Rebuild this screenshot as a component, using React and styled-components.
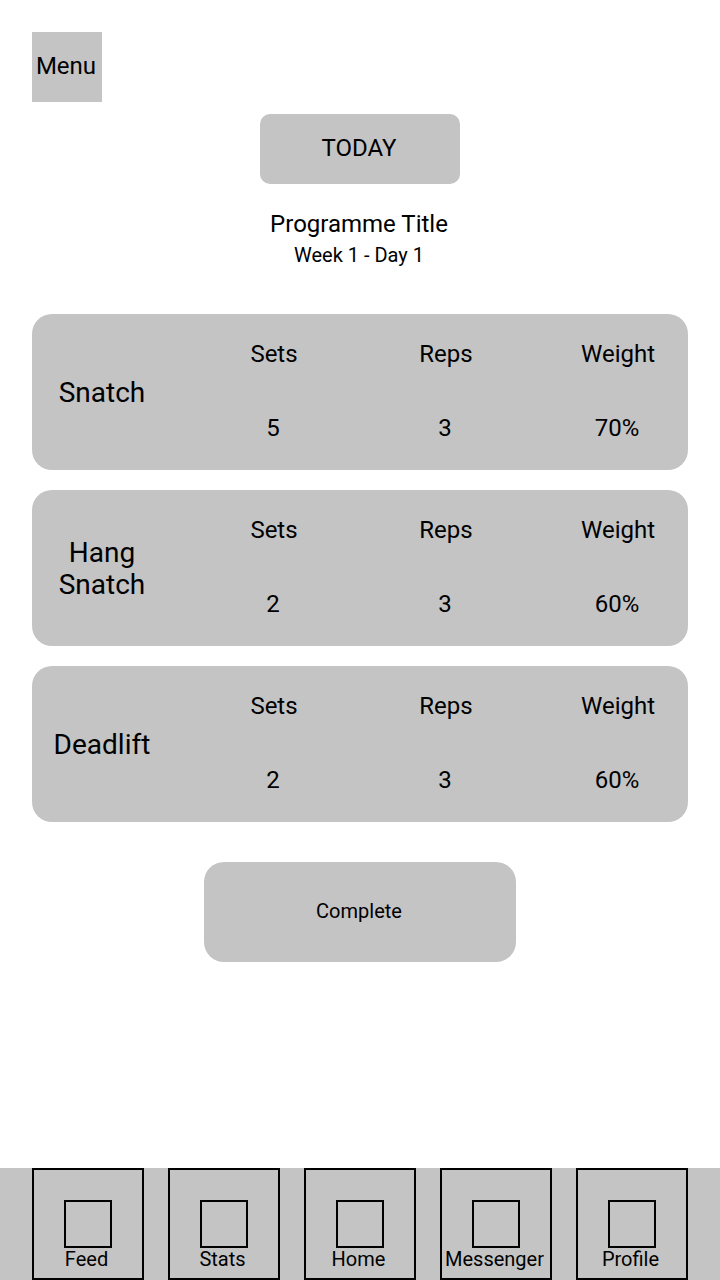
import React from "react";
import styled, { createGlobalStyle } from "styled-components";

const GlobalStyle = createGlobalStyle`
  *, *::before, *::after { box-sizing: border-box; }
  body {
    margin: 0;
    background: #fff;
    color: #000;
    font-family: Roboto, "Liberation Sans", sans-serif;
  }
`;

const Page = styled.div`
  min-height: 100vh;
  display: flex;
  flex-direction: column;
`;

const Main = styled.main`
  flex: 1;
  display: flex;
  flex-direction: column;
  align-items: center;
  padding: 32px 32px 24px;
`;

const Button = styled.button`
  padding: 0 2px 2px 0;
  border: 0;
  background: #c4c4c4;
  color: inherit;
  font-family: inherit;
  font-size: 24px;
  line-height: 28px;
  cursor: pointer;
`;

const MenuButton = styled(Button)`
  align-self: flex-start;
  width: 70px;
  height: 70px;
`;

const TodayButton = styled(Button)`
  width: 200px;
  height: 70px;
  margin-top: 12px;
  border-radius: 10px;
`;

const CompleteButton = styled(Button)`
  width: 312px;
  height: 100px;
  margin-top: 40px;
  border-radius: 20px;
  font-size: 20px;
  line-height: 24px;
`;

const Heading = styled.header`
  display: flex;
  flex-direction: column;
  align-items: center;
  gap: 5px;
  margin-top: 26px;
  padding-right: 2px;
`;

const Title = styled.h1`
  margin: 0;
  font-size: 24px;
  font-weight: 400;
  line-height: 28px;
`;

const Subtitle = styled.p`
  margin: 0;
  font-size: 20px;
  line-height: 24px;
`;

const ExerciseList = styled.div`
  width: 100%;
  display: flex;
  flex-direction: column;
  gap: 20px;
  margin-top: 47px;
`;

const ExerciseCard = styled.section`
  min-height: 156px;
  display: flex;
  align-items: center;
  justify-content: space-between;
  padding: 0 32px 0 20px;
  border-radius: 20px;
  background: #c4c4c4;
`;

const ExerciseName = styled.h2`
  width: 100px;
  margin: 0;
  padding-top: 2px;
  font-size: 28px;
  font-weight: 400;
  line-height: 32px;
  text-align: center;
`;

const Measures = styled.dl`
  flex: 0 1 420px;
  display: flex;
  justify-content: space-between;
  margin: 0;
  padding-bottom: 2px;
`;

const Measure = styled.div`
  width: 76px;
  display: flex;
  flex-direction: column;
  gap: 46px;
  font-size: 24px;
  line-height: 28px;
  text-align: center;
`;

const Value = styled.dd`
  margin: 0;
  padding-right: 2px;
`;

const TabBar = styled.nav`
  position: sticky;
  bottom: 0;
  display: flex;
  gap: 24px;
  padding: 0 32px;
  background: #c4c4c4;
`;

const Tab = styled.a`
  flex: 1 1 0;
  min-width: 0;
  height: 112px;
  display: flex;
  flex-direction: column;
  align-items: center;
  padding-top: 30px;
  border: 2px solid #000;
  color: inherit;
  text-decoration: none;
`;

const TabIcon = styled.span`
  width: 48px;
  height: 48px;
  border: 2px solid #000;
`;

const TabLabel = styled.span`
  padding-right: 3px;
  font-size: 20px;
  line-height: 22px;
`;

const exercises = [
  { name: "Snatch", sets: "5", reps: "3", weight: "70%" },
  { name: "Hang Snatch", sets: "2", reps: "3", weight: "60%" },
  { name: "Deadlift", sets: "2", reps: "3", weight: "60%" },
];

const tabs = ["Feed", "Stats", "Home", "Messenger", "Profile"];

export default function App() {
  return (
    <Page>
      <GlobalStyle />
      <Main>
        <MenuButton type="button">Menu</MenuButton>
        <TodayButton type="button">TODAY</TodayButton>
        <Heading>
          <Title>Programme Title</Title>
          <Subtitle>Week 1 - Day 1</Subtitle>
        </Heading>
        <ExerciseList>
          {exercises.map(({ name, sets, reps, weight }) => (
            <ExerciseCard key={name}>
              <ExerciseName>{name}</ExerciseName>
              <Measures>
                <Measure>
                  <dt>Sets</dt>
                  <Value>{sets}</Value>
                </Measure>
                <Measure>
                  <dt>Reps</dt>
                  <Value>{reps}</Value>
                </Measure>
                <Measure>
                  <dt>Weight</dt>
                  <Value>{weight}</Value>
                </Measure>
              </Measures>
            </ExerciseCard>
          ))}
        </ExerciseList>
        <CompleteButton type="button">Complete</CompleteButton>
      </Main>
      <TabBar aria-label="Main">
        {tabs.map((label) => (
          <Tab key={label} href={`#${label.toLowerCase()}`}>
            <TabIcon aria-hidden="true" />
            <TabLabel>{label}</TabLabel>
          </Tab>
        ))}
      </TabBar>
    </Page>
  );
}
